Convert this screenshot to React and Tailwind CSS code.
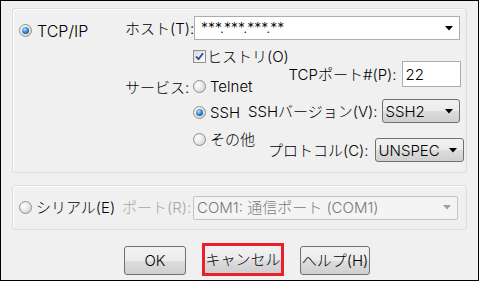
import React from "react";

function Radio({ checked }) {
  return (
    <span className="flex-none w-[13px] h-[13px] rounded-full border border-[#8e8f8f] bg-[radial-gradient(circle_at_35%_35%,#ffffff,#e8e8e8_50%,#c4c4c4)] flex items-center justify-center">
      {checked && (
        <span className="w-[7px] h-[7px] rounded-full bg-[radial-gradient(circle_at_40%_35%,#b5e2ff,#2f80cc_50%,#0c3a70)]" />
      )}
    </span>
  );
}

function Arrow({ color = "#000" }) {
  return (
    <svg width="8" height="5" viewBox="0 0 8 5" className="flex-none">
      <path d="M0 0 H8 L4 4.5 Z" fill={color} />
    </svg>
  );
}

function DropButton({ label, w }) {
  return (
    <div
      className={`${w} h-[24px] flex-none flex items-center justify-between pl-[3px] pr-[6px] rounded-[3px] border border-[#707070] bg-[linear-gradient(#f2f2f2_0%,#ebebeb_50%,#dddddd_51%,#cfcfcf_100%)]`}
    >
      <span>{label}</span>
      <Arrow />
    </div>
  );
}

function Button({ children, w }) {
  return (
    <div
      className={`${w} h-[29px] flex-none flex items-center justify-center rounded-[3px] border border-[#707070] bg-[linear-gradient(#f2f2f2_0%,#ebebeb_50%,#dddddd_51%,#cfcfcf_100%)]`}
    >
      {children}
    </div>
  );
}

export default function App() {
  return (
    <div className="w-[479px] h-[281px] overflow-hidden border border-black bg-[#f0f0f0] text-black text-[15px] font-light leading-none font-['Inter','Noto_Sans_CJK_JP',sans-serif] whitespace-nowrap">
      {/* Group 1 */}
      <div className="ml-[11px] mt-[7px] w-[455px] h-[165px] rounded-[3px] border border-[#d5dfe5] shadow-[inset_1px_1px_0_#ffffff] flex">
        <div className="w-[112px] flex-none pl-[6px] pt-[15px]">
          <div className="flex items-center gap-[5px] h-[13px]">
            <Radio checked />
            <span className="text-[16px]">TCP/IP</span>
          </div>
        </div>
        <div className="flex-1 flex flex-col">
          {/* host row */}
          <div className="mt-[7px] flex items-center h-[24px]">
            <span className="w-[69px] flex-none">ホスト(T):</span>
            <div className="w-[266px] h-[24px] flex-none flex items-center justify-between pl-[6px] pr-[6px] bg-white border border-[#abadb3]">
              <span className="text-[14px]">***.***.***.**</span>
              <Arrow />
            </div>
          </div>
          {/* lower area */}
          <div className="flex">
            <div className="w-[68px] flex-none pt-[40px]">
              <span>サービス:</span>
            </div>
            <div className="w-[55px] flex-none flex flex-col">
              <div className="mt-[10px] h-[13px] flex items-center gap-[1px]">
                <span className="flex-none w-[13px] h-[13px] border border-[#8e8f8f] bg-[linear-gradient(135deg,#d8d8d8,#ffffff)] flex items-center justify-center">
                  <svg width="9" height="9" viewBox="0 0 9 9">
                    <path d="M1 4.5 L3.5 7.2 L8 1.2" stroke="#2a479c" strokeWidth="1.8" fill="none" />
                  </svg>
                </span>
                <span>ヒストリ(O)</span>
              </div>
              <div className="mt-[17px] h-[13px] flex items-center gap-[4px]">
                <Radio />
                <span>Telnet</span>
              </div>
              <div className="mt-[13px] h-[13px] flex items-center gap-[4px]">
                <Radio checked />
                <span>SSH</span>
              </div>
              <div className="mt-[14px] h-[13px] flex items-center gap-[4px]">
                <Radio />
                <span>その他</span>
              </div>
            </div>
            <div className="flex-1 flex flex-col">
              <div className="mt-[21px] h-[26px] flex items-center justify-end pr-[7px] gap-[5px]">
                <span>TCPポート#(P):</span>
                <div className="w-[59px] h-[26px] flex items-center pl-[3px] bg-white border border-[#abadb3]">
                  22
                </div>
              </div>
              <div className="mt-[12px] h-[24px] flex items-center justify-end pr-[8px] gap-[4px]">
                <span>SSHバージョン(V):</span>
                <DropButton label="SSH2" w="w-[78px]" />
              </div>
              <div className="mt-[15px] h-[24px] flex items-center justify-end pr-[4px] gap-[6px]">
                <span>プロトコル(C):</span>
                <DropButton label="UNSPEC" w="w-[89px]" />
              </div>
            </div>
          </div>
        </div>
      </div>

      {/* Group 2 */}
      <div className="ml-[11px] mt-[12px] w-[455px] h-[45px] rounded-[3px] border border-[#d5dfe5] shadow-[inset_1px_1px_0_#ffffff] flex items-center pl-[6px]">
        <div className="w-[103px] flex-none flex items-center gap-[4px]">
          <Radio />
          <span>シリアル(E)</span>
        </div>
        <span className="w-[71px] flex-none text-[#a6a6a6]">ポート(R):</span>
        <div className="w-[265px] h-[24px] flex-none flex items-center justify-between pl-[3px] pr-[6px] rounded-[2px] border border-[#c4c4c4] bg-[#f4f4f4] text-[#7a7a7a]">
          <span>COM1: 通信ポート (COM1)</span>
          <Arrow color="#a0a0a0" />
        </div>
      </div>

      {/* Buttons */}
      <div className="mt-[14px] flex items-center pl-[123px]">
        <Button w="w-[62px]">OK</Button>
        <div className="ml-[16px] -mt-[1px] w-[82px] h-[33px] flex-none border-[3px] border-[#e8202a] flex">
          <div className="flex-1 flex items-center justify-center bg-[linear-gradient(#f2f2f2_0%,#ebebeb_50%,#dddddd_51%,#cfcfcf_100%)]">
            キャンセル
          </div>
        </div>
        <div className="ml-[16px]">
          <Button w="w-[70px]">ヘルプ(H)</Button>
        </div>
      </div>
    </div>
  );
}
